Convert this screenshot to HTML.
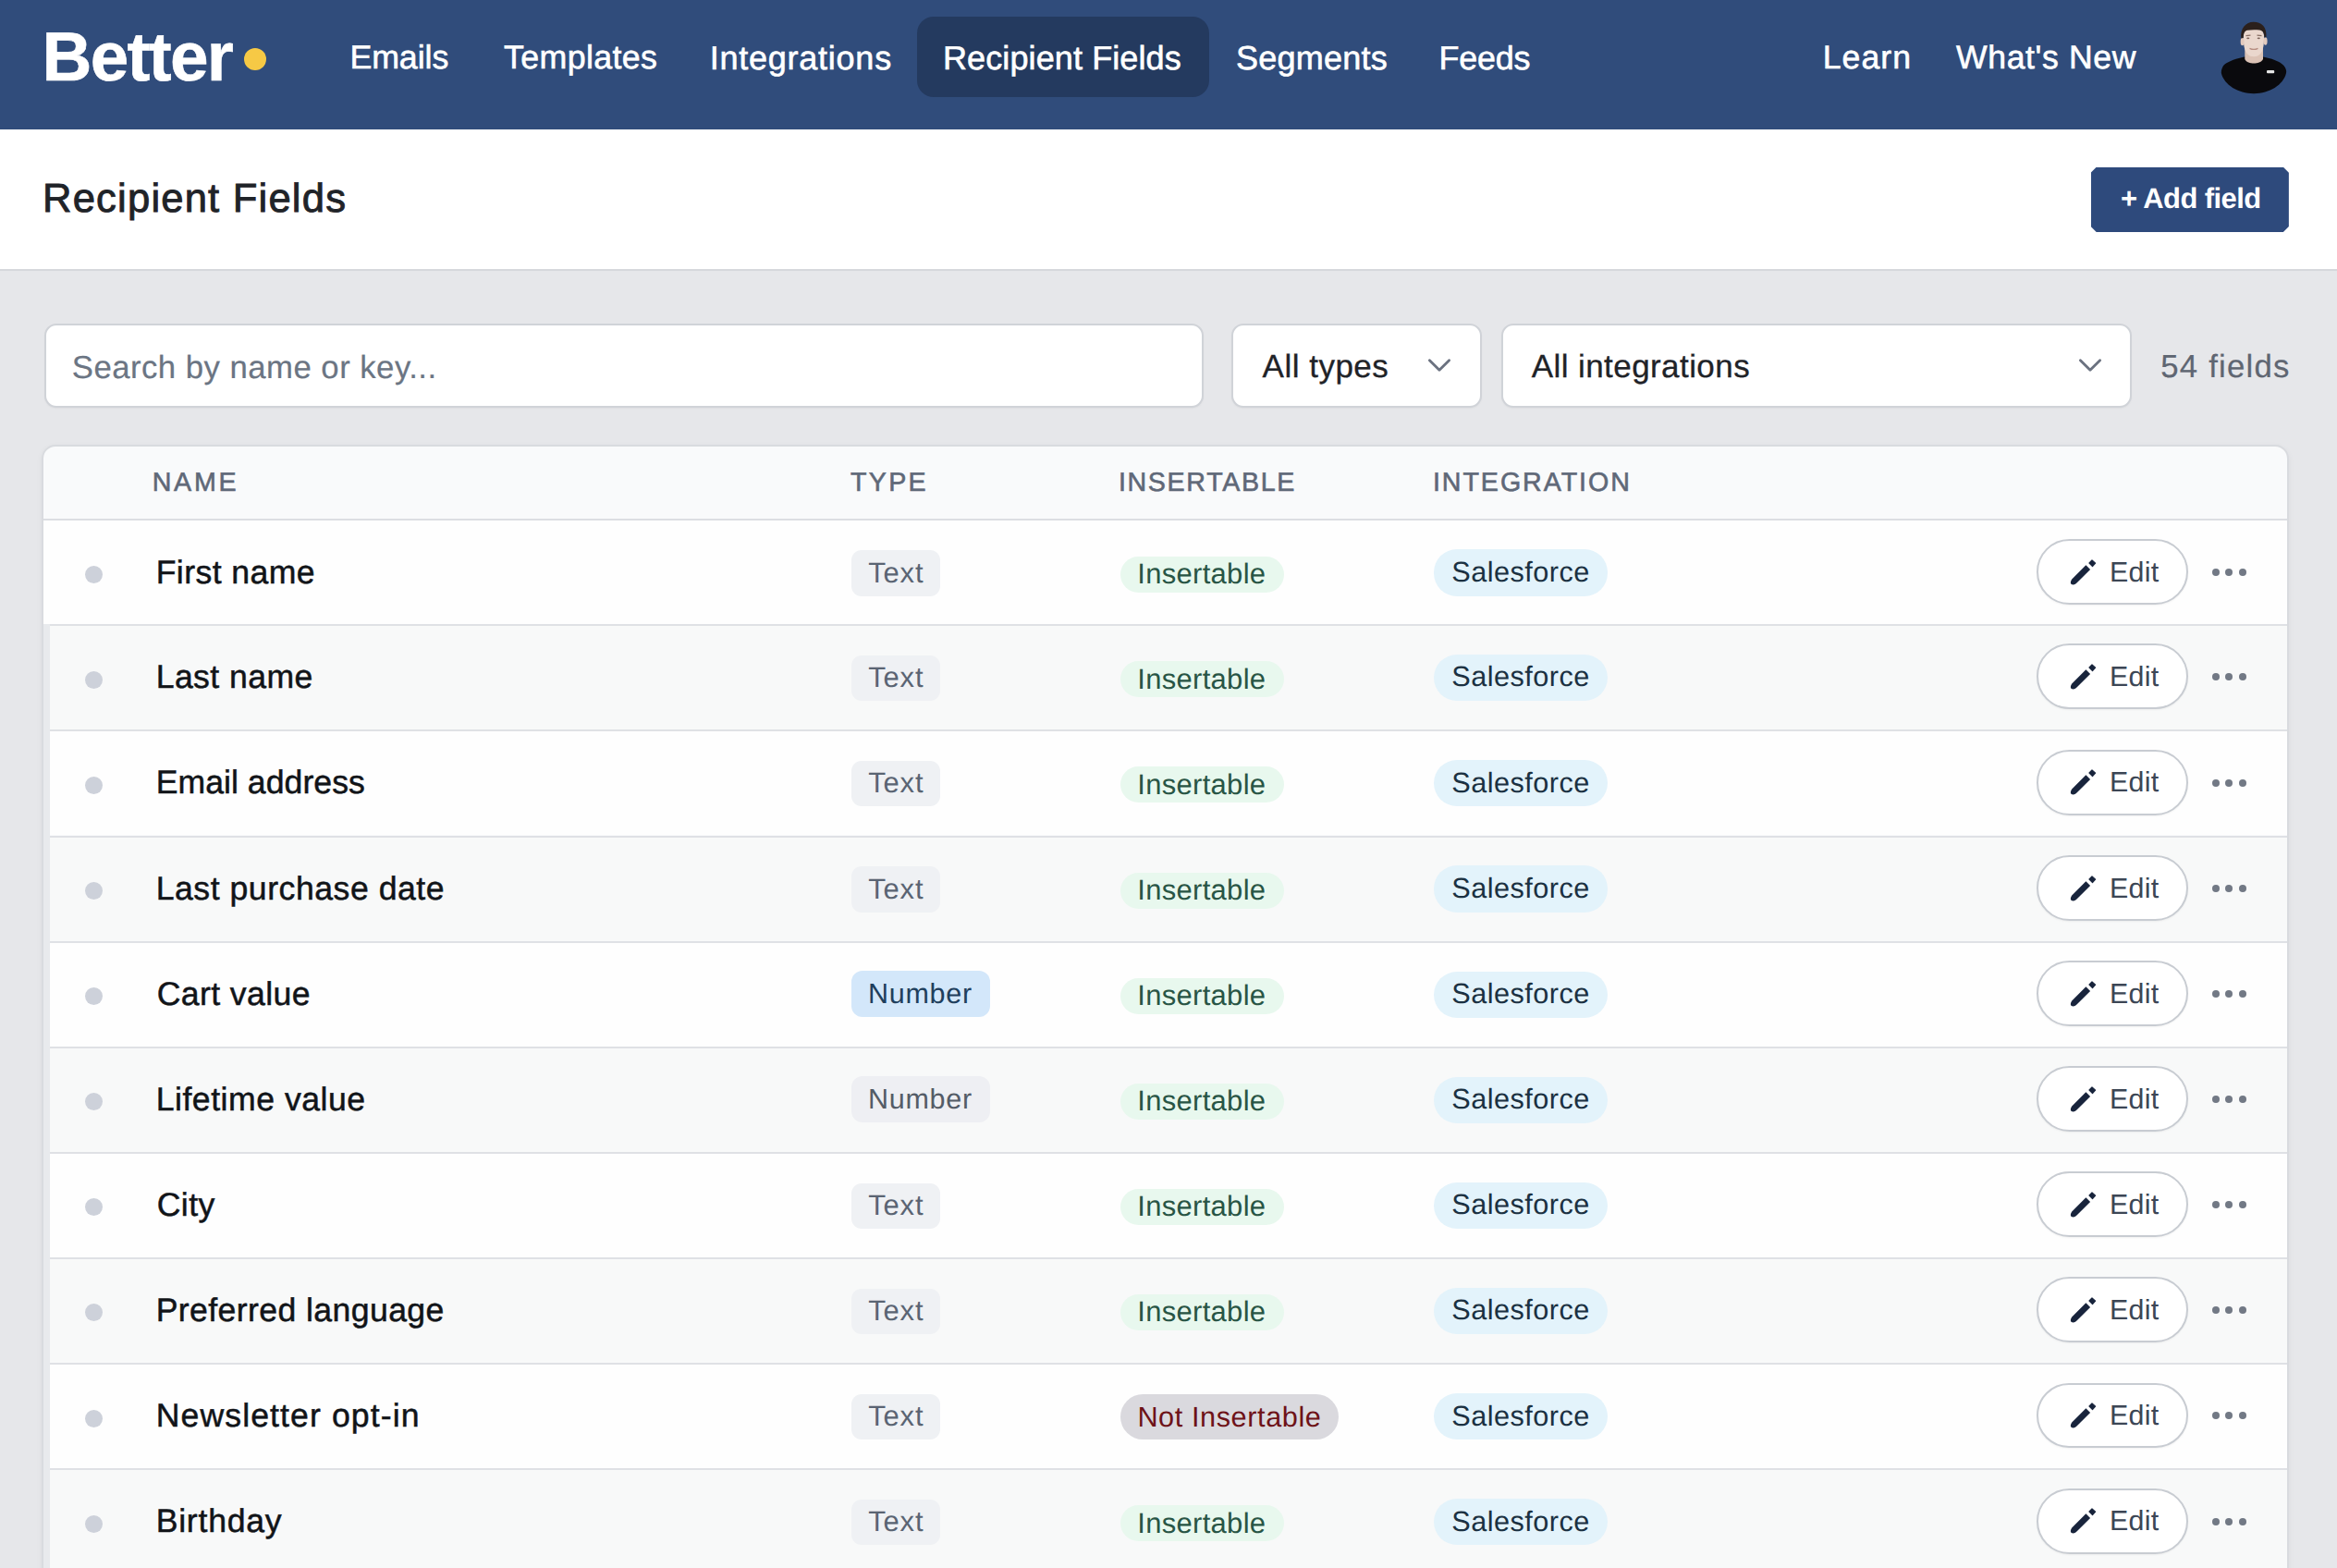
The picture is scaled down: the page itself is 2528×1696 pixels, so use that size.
<!DOCTYPE html>
<html><head><meta charset="utf-8"><title>Recipient Fields</title>
<style>
html,body{margin:0;padding:0}
body{width:2528px;height:1696px;overflow:hidden;position:relative;background:#e6e7ea;font-family:"Liberation Sans",sans-serif;text-rendering:geometricPrecision}
.t{position:absolute;white-space:nowrap;line-height:1}
.b{position:absolute;box-sizing:border-box}
</style></head><body>
<div class="b" style="left:0.00px;top:0.00px;width:2528.00px;height:140.00px;background:#304c7b"></div>
<div class="t" style="left:45.50px;top:24.00px;font-size:74.71px;font-weight:700;letter-spacing:-1.7px;color:#ffffff;-webkit-text-stroke:0.6px #ffffff;">Better</div>
<div class="b" style="left:263.50px;top:52.00px;width:24.00px;height:24.00px;background:#f6c945;border-radius:50%"></div>
<div class="b" style="left:992.30px;top:17.50px;width:315.80px;height:87.80px;background:#243a5f;border-radius:18px"></div>
<div class="t" style="left:378.40px;top:45.40px;font-size:35.76px;font-weight:400;letter-spacing:-0.08px;color:#ffffff;-webkit-text-stroke:0.6px #ffffff;">Emails</div>
<div class="t" style="left:545.00px;top:45.40px;font-size:35.76px;font-weight:400;letter-spacing:0.375px;color:#ffffff;-webkit-text-stroke:0.6px #ffffff;">Templates</div>
<div class="t" style="left:767.80px;top:44.60px;font-size:36.05px;font-weight:400;letter-spacing:0.727px;color:#ffffff;-webkit-text-stroke:0.6px #ffffff;">Integrations</div>
<div class="t" style="left:1020.00px;top:44.60px;font-size:36.05px;font-weight:400;letter-spacing:0.087px;color:#ffffff;-webkit-text-stroke:0.6px #ffffff;">Recipient Fields</div>
<div class="t" style="left:1337.00px;top:44.60px;font-size:36.05px;font-weight:400;letter-spacing:0.2px;color:#ffffff;-webkit-text-stroke:0.6px #ffffff;">Segments</div>
<div class="t" style="left:1556.60px;top:45.50px;font-size:35.9px;font-weight:400;letter-spacing:-0.25px;color:#ffffff;-webkit-text-stroke:0.6px #ffffff;">Feeds</div>
<div class="t" style="left:1971.70px;top:45.30px;font-size:35.61px;font-weight:400;letter-spacing:1.075px;color:#ffffff;-webkit-text-stroke:0.6px #ffffff;">Learn</div>
<div class="t" style="left:2116.00px;top:45.30px;font-size:35.61px;font-weight:400;letter-spacing:0.622px;color:#ffffff;-webkit-text-stroke:0.6px #ffffff;">What's New</div>
<svg style="position:absolute;left:2398px;top:20px" width="80" height="84" viewBox="2398 20 80 84">
<path d="M2427.8 61.5 L2448.2 61.5 C2456 63 2466 66 2470.5 71 C2473 74 2473.5 77 2473 79 C2470 92 2455 101 2438 101.2 C2421 101 2406 92 2402.8 79 C2402.5 76 2404 72 2406 70 C2411 66 2420 63 2427.8 61.5 Z" fill="#0a0a0d"/>
<path d="M2428.3 52 L2448 52 L2448 64 C2446 67.5 2442 68.5 2438 68.5 C2434 68.5 2430 67.5 2428.3 64 Z" fill="#dcc3b6"/>
<path d="M2426.8 38 C2426.5 47 2427.5 53 2430 57 C2432.5 60.5 2435 61.3 2438 61.3 C2441 61.3 2443.5 60.5 2446 57 C2448.5 53 2449.2 47 2449 38 C2448 31 2443 29 2438 29 C2433 29 2427.5 31 2426.8 38 Z" fill="#ead7cd"/>
<ellipse cx="2425.6" cy="45" rx="2" ry="4.3" fill="#e2c9bd"/>
<ellipse cx="2450.6" cy="44.5" rx="2" ry="4.3" fill="#e2c9bd"/>
<path d="M2424.3 41.5 C2423 30 2430 23.5 2438 23.8 C2446 23.8 2452.5 29 2451.4 40.5 L2449.5 40 C2449 35 2447.5 33 2444 32.5 C2440 32 2435 32 2431 32.8 C2428 33.5 2427 36 2426.6 41 Z" fill="#2b201c"/>
<path d="M2429.5 38.6 L2434.5 38.2 M2441.5 38.2 L2446.5 38.6" stroke="#8a7066" stroke-width="1.2"/>
<ellipse cx="2431.8" cy="41.3" rx="1.6" ry="0.9" fill="#7d655c"/>
<ellipse cx="2443.3" cy="41.3" rx="1.6" ry="0.9" fill="#7d655c"/>
<path d="M2433.5 52.3 C2436 53.6 2440 53.6 2442.5 52.3" stroke="#b58c80" stroke-width="1.3" fill="none"/>
<rect x="2452" y="76" width="8.2" height="3.2" rx="1" fill="#e6e6e6"/>
</svg>
<div class="b" style="left:0.00px;top:140.00px;width:2528.00px;height:153.00px;background:#ffffff;border-bottom:2px solid #d6d8dc"></div>
<div class="t" style="left:46.00px;top:194.20px;font-size:43.6px;font-weight:400;letter-spacing:1.187px;color:#1f2328;-webkit-text-stroke:0.9px #1f2328;">Recipient Fields</div>
<div class="b" style="left:2261.7px;top:180.8px;width:214.2px;height:70.1px;background:#2e4a7c;clip-path:polygon(6px 0,calc(100% - 6px) 0,100% 6px,100% calc(100% - 6px),calc(100% - 6px) 100%,6px 100%,0 calc(100% - 6px),0 6px)"></div>
<div class="t" style="left:2293.90px;top:200.30px;font-size:30.96px;font-weight:700;letter-spacing:-0.57px;color:#ffffff;">+ Add field</div>
<div class="b" style="left:47.50px;top:350.00px;width:1254.50px;height:90.50px;background:#fff;border:2px solid #d0d3d8;border-radius:13px;box-shadow:0 1px 2px rgba(0,0,0,0.04)"></div>
<div class="t" style="left:77.80px;top:380.60px;font-size:34.74px;font-weight:400;letter-spacing:0.465px;color:#6b7583;-webkit-text-stroke:0.2px #6b7583;">Search by name or key...</div>
<div class="b" style="left:1332.00px;top:350.00px;width:270.80px;height:90.50px;background:#fff;border:2px solid #d0d3d8;border-radius:13px;box-shadow:0 1px 2px rgba(0,0,0,0.04)"></div>
<div class="t" style="left:1365.60px;top:378.60px;font-size:35.03px;font-weight:400;letter-spacing:0.488px;color:#1f2328;-webkit-text-stroke:0.3px #1f2328;">All types</div>
<div class="b" style="left:1624.40px;top:350.00px;width:681.90px;height:90.50px;background:#fff;border:2px solid #d0d3d8;border-radius:13px;box-shadow:0 1px 2px rgba(0,0,0,0.04)"></div>
<div class="t" style="left:1656.70px;top:378.60px;font-size:35.03px;font-weight:400;letter-spacing:0.42px;color:#1f2328;-webkit-text-stroke:0.3px #1f2328;">All integrations</div>
<svg style="position:absolute;left:1543px;top:386px" width="28" height="18" viewBox="0 0 28 18"><path d="M3.4 3.8 L14 14.2 L24.6 3.8" fill="none" stroke="#6b7280" stroke-width="2.9" stroke-linecap="round" stroke-linejoin="round"/></svg>
<svg style="position:absolute;left:2247px;top:386px" width="28" height="18" viewBox="0 0 28 18"><path d="M3.4 3.8 L14 14.2 L24.6 3.8" fill="none" stroke="#6b7280" stroke-width="2.9" stroke-linecap="round" stroke-linejoin="round"/></svg>
<div class="t" style="left:2337.30px;top:379.50px;font-size:34.74px;font-weight:400;letter-spacing:1.212px;color:#5f6672;-webkit-text-stroke:0.2px #5f6672;">54 fields</div>
<div class="b" style="left:45.00px;top:480.50px;width:2431.00px;height:1279.50px;background:#f9fafb;border:2px solid #d9dbdf;border-radius:15px;box-shadow:0 2px 6px rgba(0,0,0,0.05)"></div>
<div class="b" style="left:47.00px;top:561.00px;width:2427.00px;height:2.00px;background:#dcdee2"></div>
<div class="t" style="left:164.70px;top:507.60px;font-size:28.63px;font-weight:400;letter-spacing:2.733px;color:#5f6878;-webkit-text-stroke:0.6px #5f6878;">NAME</div>
<div class="t" style="left:920.00px;top:507.60px;font-size:28.63px;font-weight:400;letter-spacing:2.3px;color:#5f6878;-webkit-text-stroke:0.6px #5f6878;">TYPE</div>
<div class="t" style="left:1209.90px;top:507.60px;font-size:28.63px;font-weight:400;letter-spacing:1.656px;color:#5f6878;-webkit-text-stroke:0.6px #5f6878;">INSERTABLE</div>
<div class="t" style="left:1549.90px;top:507.60px;font-size:28.63px;font-weight:400;letter-spacing:1.95px;color:#5f6878;-webkit-text-stroke:0.6px #5f6878;">INTEGRATION</div>
<div class="b" style="left:47.00px;top:563.00px;width:2427.00px;height:112.20px;background:#fefefe"></div>
<div class="b" style="left:47.00px;top:675.20px;width:2427.00px;height:2.00px;background:#dfe1e5"></div>
<div class="b" style="left:92.30px;top:611.90px;width:19.00px;height:19.00px;background:#cdd1da;border-radius:50%"></div>
<div class="t" style="left:168.70px;top:601.60px;font-size:35.61px;font-weight:400;letter-spacing:0.411px;color:#111418;-webkit-text-stroke:0.5px #111418;">First name</div>
<div class="b" style="left:921.00px;top:595.10px;width:96.20px;height:49.50px;background:#eff1f4;border-radius:11px"></div>
<div class="t" style="left:939.20px;top:604.60px;font-size:30.96px;font-weight:400;letter-spacing:0.867px;color:#5a6473;">Text</div>
<div class="b" style="left:1211.70px;top:601.60px;width:177.10px;height:39.00px;background:#e8f8ee;border-radius:20px"></div>
<div class="t" style="left:1230.30px;top:605.90px;font-size:30.96px;font-weight:400;letter-spacing:0.311px;color:#285545;">Insertable</div>
<div class="b" style="left:1550.70px;top:594.40px;width:188.00px;height:50.20px;background:#e3f3fb;border-radius:25px"></div>
<div class="t" style="left:1570.30px;top:603.80px;font-size:30.67px;font-weight:400;letter-spacing:0.467px;color:#1b3142;">Salesforce</div>
<div class="b" style="left:2203.00px;top:582.80px;width:164.20px;height:70.90px;background:#fff;border:2px solid #c8ccd2;border-radius:36px;box-shadow:0 1px 2px rgba(0,0,0,0.05)"></div>
<svg style="position:absolute;left:2236px;top:601.60px" width="34" height="34" viewBox="0 0 34 34"><path d="M20.4 9.3 L25.1 14 L10 29.1 Q8 30.9 5.5 30.3 Q3.6 29.8 3.8 28 Q4 26 5.2 24.5 Z" fill="#18243c"/><path d="M27 3.9 L30.6 7.1 L27.5 10.6 L24 7 Z" fill="#18243c" stroke="#18243c" stroke-width="1.2" stroke-linejoin="round"/></svg>
<div class="t" style="left:2281.90px;top:603.60px;font-size:30.38px;font-weight:400;letter-spacing:0.333px;color:#3c4655;">Edit</div>
<div class="b" style="left:2393.00px;top:614.70px;width:8.00px;height:8.00px;background:#727985;border-radius:50%"></div>
<div class="b" style="left:2407.30px;top:614.70px;width:8.00px;height:8.00px;background:#727985;border-radius:50%"></div>
<div class="b" style="left:2421.70px;top:614.70px;width:8.00px;height:8.00px;background:#727985;border-radius:50%"></div>
<div class="b" style="left:47.00px;top:675.20px;width:7.00px;height:116.15px;background:#e8eaed"></div>
<div class="b" style="left:54.00px;top:677.20px;width:2420.00px;height:112.15px;background:#f8f9f9"></div>
<div class="b" style="left:54.00px;top:789.35px;width:2420.00px;height:2.00px;background:#dfe1e5"></div>
<div class="b" style="left:92.30px;top:725.58px;width:19.00px;height:19.00px;background:#cdd1da;border-radius:50%"></div>
<div class="t" style="left:168.70px;top:715.28px;font-size:35.61px;font-weight:400;letter-spacing:0.413px;color:#111418;-webkit-text-stroke:0.5px #111418;">Last name</div>
<div class="b" style="left:921.00px;top:708.78px;width:96.20px;height:49.50px;background:#eff1f4;border-radius:11px"></div>
<div class="t" style="left:939.20px;top:718.28px;font-size:30.96px;font-weight:400;letter-spacing:0.867px;color:#5a6473;">Text</div>
<div class="b" style="left:1211.70px;top:715.28px;width:177.10px;height:39.00px;background:#e8f8ee;border-radius:20px"></div>
<div class="t" style="left:1230.30px;top:719.58px;font-size:30.96px;font-weight:400;letter-spacing:0.311px;color:#285545;">Insertable</div>
<div class="b" style="left:1550.70px;top:708.08px;width:188.00px;height:50.20px;background:#e3f3fb;border-radius:25px"></div>
<div class="t" style="left:1570.30px;top:717.48px;font-size:30.67px;font-weight:400;letter-spacing:0.467px;color:#1b3142;">Salesforce</div>
<div class="b" style="left:2203.00px;top:696.48px;width:164.20px;height:70.90px;background:#fff;border:2px solid #c8ccd2;border-radius:36px;box-shadow:0 1px 2px rgba(0,0,0,0.05)"></div>
<svg style="position:absolute;left:2236px;top:715.28px" width="34" height="34" viewBox="0 0 34 34"><path d="M20.4 9.3 L25.1 14 L10 29.1 Q8 30.9 5.5 30.3 Q3.6 29.8 3.8 28 Q4 26 5.2 24.5 Z" fill="#18243c"/><path d="M27 3.9 L30.6 7.1 L27.5 10.6 L24 7 Z" fill="#18243c" stroke="#18243c" stroke-width="1.2" stroke-linejoin="round"/></svg>
<div class="t" style="left:2281.90px;top:717.28px;font-size:30.38px;font-weight:400;letter-spacing:0.333px;color:#3c4655;">Edit</div>
<div class="b" style="left:2393.00px;top:728.38px;width:8.00px;height:8.00px;background:#727985;border-radius:50%"></div>
<div class="b" style="left:2407.30px;top:728.38px;width:8.00px;height:8.00px;background:#727985;border-radius:50%"></div>
<div class="b" style="left:2421.70px;top:728.38px;width:8.00px;height:8.00px;background:#727985;border-radius:50%"></div>
<div class="b" style="left:47.00px;top:789.35px;width:7.00px;height:116.15px;background:#e8eaed"></div>
<div class="b" style="left:54.00px;top:791.35px;width:2420.00px;height:112.15px;background:#fefefe"></div>
<div class="b" style="left:54.00px;top:903.50px;width:2420.00px;height:2.00px;background:#dfe1e5"></div>
<div class="b" style="left:92.30px;top:839.72px;width:19.00px;height:19.00px;background:#cdd1da;border-radius:50%"></div>
<div class="t" style="left:168.70px;top:829.42px;font-size:35.61px;font-weight:400;letter-spacing:0.042px;color:#111418;-webkit-text-stroke:0.5px #111418;">Email address</div>
<div class="b" style="left:921.00px;top:822.92px;width:96.20px;height:49.50px;background:#eff1f4;border-radius:11px"></div>
<div class="t" style="left:939.20px;top:832.42px;font-size:30.96px;font-weight:400;letter-spacing:0.867px;color:#5a6473;">Text</div>
<div class="b" style="left:1211.70px;top:829.42px;width:177.10px;height:39.00px;background:#e8f8ee;border-radius:20px"></div>
<div class="t" style="left:1230.30px;top:833.72px;font-size:30.96px;font-weight:400;letter-spacing:0.311px;color:#285545;">Insertable</div>
<div class="b" style="left:1550.70px;top:822.22px;width:188.00px;height:50.20px;background:#e3f3fb;border-radius:25px"></div>
<div class="t" style="left:1570.30px;top:831.62px;font-size:30.67px;font-weight:400;letter-spacing:0.467px;color:#1b3142;">Salesforce</div>
<div class="b" style="left:2203.00px;top:810.62px;width:164.20px;height:70.90px;background:#fff;border:2px solid #c8ccd2;border-radius:36px;box-shadow:0 1px 2px rgba(0,0,0,0.05)"></div>
<svg style="position:absolute;left:2236px;top:829.42px" width="34" height="34" viewBox="0 0 34 34"><path d="M20.4 9.3 L25.1 14 L10 29.1 Q8 30.9 5.5 30.3 Q3.6 29.8 3.8 28 Q4 26 5.2 24.5 Z" fill="#18243c"/><path d="M27 3.9 L30.6 7.1 L27.5 10.6 L24 7 Z" fill="#18243c" stroke="#18243c" stroke-width="1.2" stroke-linejoin="round"/></svg>
<div class="t" style="left:2281.90px;top:831.42px;font-size:30.38px;font-weight:400;letter-spacing:0.333px;color:#3c4655;">Edit</div>
<div class="b" style="left:2393.00px;top:842.52px;width:8.00px;height:8.00px;background:#727985;border-radius:50%"></div>
<div class="b" style="left:2407.30px;top:842.52px;width:8.00px;height:8.00px;background:#727985;border-radius:50%"></div>
<div class="b" style="left:2421.70px;top:842.52px;width:8.00px;height:8.00px;background:#727985;border-radius:50%"></div>
<div class="b" style="left:47.00px;top:903.50px;width:7.00px;height:116.15px;background:#e8eaed"></div>
<div class="b" style="left:54.00px;top:905.50px;width:2420.00px;height:112.15px;background:#f8f9f9"></div>
<div class="b" style="left:54.00px;top:1017.65px;width:2420.00px;height:2.00px;background:#dfe1e5"></div>
<div class="b" style="left:92.30px;top:953.88px;width:19.00px;height:19.00px;background:#cdd1da;border-radius:50%"></div>
<div class="t" style="left:168.70px;top:943.58px;font-size:35.61px;font-weight:400;letter-spacing:0.529px;color:#111418;-webkit-text-stroke:0.5px #111418;">Last purchase date</div>
<div class="b" style="left:921.00px;top:937.08px;width:96.20px;height:49.50px;background:#eff1f4;border-radius:11px"></div>
<div class="t" style="left:939.20px;top:946.58px;font-size:30.96px;font-weight:400;letter-spacing:0.867px;color:#5a6473;">Text</div>
<div class="b" style="left:1211.70px;top:943.58px;width:177.10px;height:39.00px;background:#e8f8ee;border-radius:20px"></div>
<div class="t" style="left:1230.30px;top:947.88px;font-size:30.96px;font-weight:400;letter-spacing:0.311px;color:#285545;">Insertable</div>
<div class="b" style="left:1550.70px;top:936.38px;width:188.00px;height:50.20px;background:#e3f3fb;border-radius:25px"></div>
<div class="t" style="left:1570.30px;top:945.77px;font-size:30.67px;font-weight:400;letter-spacing:0.467px;color:#1b3142;">Salesforce</div>
<div class="b" style="left:2203.00px;top:924.78px;width:164.20px;height:70.90px;background:#fff;border:2px solid #c8ccd2;border-radius:36px;box-shadow:0 1px 2px rgba(0,0,0,0.05)"></div>
<svg style="position:absolute;left:2236px;top:943.58px" width="34" height="34" viewBox="0 0 34 34"><path d="M20.4 9.3 L25.1 14 L10 29.1 Q8 30.9 5.5 30.3 Q3.6 29.8 3.8 28 Q4 26 5.2 24.5 Z" fill="#18243c"/><path d="M27 3.9 L30.6 7.1 L27.5 10.6 L24 7 Z" fill="#18243c" stroke="#18243c" stroke-width="1.2" stroke-linejoin="round"/></svg>
<div class="t" style="left:2281.90px;top:945.58px;font-size:30.38px;font-weight:400;letter-spacing:0.333px;color:#3c4655;">Edit</div>
<div class="b" style="left:2393.00px;top:956.68px;width:8.00px;height:8.00px;background:#727985;border-radius:50%"></div>
<div class="b" style="left:2407.30px;top:956.68px;width:8.00px;height:8.00px;background:#727985;border-radius:50%"></div>
<div class="b" style="left:2421.70px;top:956.68px;width:8.00px;height:8.00px;background:#727985;border-radius:50%"></div>
<div class="b" style="left:47.00px;top:1017.65px;width:7.00px;height:116.15px;background:#e8eaed"></div>
<div class="b" style="left:54.00px;top:1019.65px;width:2420.00px;height:112.15px;background:#fefefe"></div>
<div class="b" style="left:54.00px;top:1131.80px;width:2420.00px;height:2.00px;background:#dfe1e5"></div>
<div class="b" style="left:92.30px;top:1068.03px;width:19.00px;height:19.00px;background:#cdd1da;border-radius:50%"></div>
<div class="t" style="left:169.70px;top:1057.73px;font-size:35.61px;font-weight:400;letter-spacing:0.4px;color:#111418;-webkit-text-stroke:0.5px #111418;">Cart value</div>
<div class="b" style="left:921.00px;top:1050.23px;width:149.70px;height:50.00px;background:#d3e7fa;border-radius:12px"></div>
<div class="t" style="left:938.90px;top:1059.93px;font-size:30.52px;font-weight:400;letter-spacing:0.74px;color:#1f3f5d;">Number</div>
<div class="b" style="left:1211.70px;top:1057.73px;width:177.10px;height:39.00px;background:#e8f8ee;border-radius:20px"></div>
<div class="t" style="left:1230.30px;top:1062.03px;font-size:30.96px;font-weight:400;letter-spacing:0.311px;color:#285545;">Insertable</div>
<div class="b" style="left:1550.70px;top:1050.53px;width:188.00px;height:50.20px;background:#e3f3fb;border-radius:25px"></div>
<div class="t" style="left:1570.30px;top:1059.93px;font-size:30.67px;font-weight:400;letter-spacing:0.467px;color:#1b3142;">Salesforce</div>
<div class="b" style="left:2203.00px;top:1038.93px;width:164.20px;height:70.90px;background:#fff;border:2px solid #c8ccd2;border-radius:36px;box-shadow:0 1px 2px rgba(0,0,0,0.05)"></div>
<svg style="position:absolute;left:2236px;top:1057.73px" width="34" height="34" viewBox="0 0 34 34"><path d="M20.4 9.3 L25.1 14 L10 29.1 Q8 30.9 5.5 30.3 Q3.6 29.8 3.8 28 Q4 26 5.2 24.5 Z" fill="#18243c"/><path d="M27 3.9 L30.6 7.1 L27.5 10.6 L24 7 Z" fill="#18243c" stroke="#18243c" stroke-width="1.2" stroke-linejoin="round"/></svg>
<div class="t" style="left:2281.90px;top:1059.73px;font-size:30.38px;font-weight:400;letter-spacing:0.333px;color:#3c4655;">Edit</div>
<div class="b" style="left:2393.00px;top:1070.83px;width:8.00px;height:8.00px;background:#727985;border-radius:50%"></div>
<div class="b" style="left:2407.30px;top:1070.83px;width:8.00px;height:8.00px;background:#727985;border-radius:50%"></div>
<div class="b" style="left:2421.70px;top:1070.83px;width:8.00px;height:8.00px;background:#727985;border-radius:50%"></div>
<div class="b" style="left:47.00px;top:1131.80px;width:7.00px;height:116.15px;background:#e8eaed"></div>
<div class="b" style="left:54.00px;top:1133.80px;width:2420.00px;height:112.15px;background:#f8f9f9"></div>
<div class="b" style="left:54.00px;top:1245.95px;width:2420.00px;height:2.00px;background:#dfe1e5"></div>
<div class="b" style="left:92.30px;top:1182.17px;width:19.00px;height:19.00px;background:#cdd1da;border-radius:50%"></div>
<div class="t" style="left:168.70px;top:1171.88px;font-size:35.61px;font-weight:400;letter-spacing:0.515px;color:#111418;-webkit-text-stroke:0.5px #111418;">Lifetime value</div>
<div class="b" style="left:921.00px;top:1164.38px;width:149.70px;height:50.00px;background:#eeeff3;border-radius:12px"></div>
<div class="t" style="left:938.90px;top:1174.07px;font-size:30.52px;font-weight:400;letter-spacing:0.74px;color:#545c67;">Number</div>
<div class="b" style="left:1211.70px;top:1171.88px;width:177.10px;height:39.00px;background:#e8f8ee;border-radius:20px"></div>
<div class="t" style="left:1230.30px;top:1176.17px;font-size:30.96px;font-weight:400;letter-spacing:0.311px;color:#285545;">Insertable</div>
<div class="b" style="left:1550.70px;top:1164.67px;width:188.00px;height:50.20px;background:#e3f3fb;border-radius:25px"></div>
<div class="t" style="left:1570.30px;top:1174.07px;font-size:30.67px;font-weight:400;letter-spacing:0.467px;color:#1b3142;">Salesforce</div>
<div class="b" style="left:2203.00px;top:1153.08px;width:164.20px;height:70.90px;background:#fff;border:2px solid #c8ccd2;border-radius:36px;box-shadow:0 1px 2px rgba(0,0,0,0.05)"></div>
<svg style="position:absolute;left:2236px;top:1171.88px" width="34" height="34" viewBox="0 0 34 34"><path d="M20.4 9.3 L25.1 14 L10 29.1 Q8 30.9 5.5 30.3 Q3.6 29.8 3.8 28 Q4 26 5.2 24.5 Z" fill="#18243c"/><path d="M27 3.9 L30.6 7.1 L27.5 10.6 L24 7 Z" fill="#18243c" stroke="#18243c" stroke-width="1.2" stroke-linejoin="round"/></svg>
<div class="t" style="left:2281.90px;top:1173.88px;font-size:30.38px;font-weight:400;letter-spacing:0.333px;color:#3c4655;">Edit</div>
<div class="b" style="left:2393.00px;top:1184.97px;width:8.00px;height:8.00px;background:#727985;border-radius:50%"></div>
<div class="b" style="left:2407.30px;top:1184.97px;width:8.00px;height:8.00px;background:#727985;border-radius:50%"></div>
<div class="b" style="left:2421.70px;top:1184.97px;width:8.00px;height:8.00px;background:#727985;border-radius:50%"></div>
<div class="b" style="left:47.00px;top:1245.95px;width:7.00px;height:116.15px;background:#e8eaed"></div>
<div class="b" style="left:54.00px;top:1247.95px;width:2420.00px;height:112.15px;background:#fefefe"></div>
<div class="b" style="left:54.00px;top:1360.10px;width:2420.00px;height:2.00px;background:#dfe1e5"></div>
<div class="b" style="left:92.30px;top:1296.33px;width:19.00px;height:19.00px;background:#cdd1da;border-radius:50%"></div>
<div class="t" style="left:169.70px;top:1286.03px;font-size:35.61px;font-weight:400;letter-spacing:0.467px;color:#111418;-webkit-text-stroke:0.5px #111418;">City</div>
<div class="b" style="left:921.00px;top:1279.53px;width:96.20px;height:49.50px;background:#eff1f4;border-radius:11px"></div>
<div class="t" style="left:939.20px;top:1289.03px;font-size:30.96px;font-weight:400;letter-spacing:0.867px;color:#5a6473;">Text</div>
<div class="b" style="left:1211.70px;top:1286.03px;width:177.10px;height:39.00px;background:#e8f8ee;border-radius:20px"></div>
<div class="t" style="left:1230.30px;top:1290.33px;font-size:30.96px;font-weight:400;letter-spacing:0.311px;color:#285545;">Insertable</div>
<div class="b" style="left:1550.70px;top:1278.83px;width:188.00px;height:50.20px;background:#e3f3fb;border-radius:25px"></div>
<div class="t" style="left:1570.30px;top:1288.22px;font-size:30.67px;font-weight:400;letter-spacing:0.467px;color:#1b3142;">Salesforce</div>
<div class="b" style="left:2203.00px;top:1267.23px;width:164.20px;height:70.90px;background:#fff;border:2px solid #c8ccd2;border-radius:36px;box-shadow:0 1px 2px rgba(0,0,0,0.05)"></div>
<svg style="position:absolute;left:2236px;top:1286.03px" width="34" height="34" viewBox="0 0 34 34"><path d="M20.4 9.3 L25.1 14 L10 29.1 Q8 30.9 5.5 30.3 Q3.6 29.8 3.8 28 Q4 26 5.2 24.5 Z" fill="#18243c"/><path d="M27 3.9 L30.6 7.1 L27.5 10.6 L24 7 Z" fill="#18243c" stroke="#18243c" stroke-width="1.2" stroke-linejoin="round"/></svg>
<div class="t" style="left:2281.90px;top:1288.03px;font-size:30.38px;font-weight:400;letter-spacing:0.333px;color:#3c4655;">Edit</div>
<div class="b" style="left:2393.00px;top:1299.12px;width:8.00px;height:8.00px;background:#727985;border-radius:50%"></div>
<div class="b" style="left:2407.30px;top:1299.12px;width:8.00px;height:8.00px;background:#727985;border-radius:50%"></div>
<div class="b" style="left:2421.70px;top:1299.12px;width:8.00px;height:8.00px;background:#727985;border-radius:50%"></div>
<div class="b" style="left:47.00px;top:1360.10px;width:7.00px;height:116.15px;background:#e8eaed"></div>
<div class="b" style="left:54.00px;top:1362.10px;width:2420.00px;height:112.15px;background:#f8f9f9"></div>
<div class="b" style="left:54.00px;top:1474.25px;width:2420.00px;height:2.00px;background:#dfe1e5"></div>
<div class="b" style="left:92.30px;top:1410.48px;width:19.00px;height:19.00px;background:#cdd1da;border-radius:50%"></div>
<div class="t" style="left:168.70px;top:1400.18px;font-size:35.61px;font-weight:400;letter-spacing:0.4px;color:#111418;-webkit-text-stroke:0.5px #111418;">Preferred language</div>
<div class="b" style="left:921.00px;top:1393.68px;width:96.20px;height:49.50px;background:#eff1f4;border-radius:11px"></div>
<div class="t" style="left:939.20px;top:1403.18px;font-size:30.96px;font-weight:400;letter-spacing:0.867px;color:#5a6473;">Text</div>
<div class="b" style="left:1211.70px;top:1400.18px;width:177.10px;height:39.00px;background:#e8f8ee;border-radius:20px"></div>
<div class="t" style="left:1230.30px;top:1404.48px;font-size:30.96px;font-weight:400;letter-spacing:0.311px;color:#285545;">Insertable</div>
<div class="b" style="left:1550.70px;top:1392.98px;width:188.00px;height:50.20px;background:#e3f3fb;border-radius:25px"></div>
<div class="t" style="left:1570.30px;top:1402.38px;font-size:30.67px;font-weight:400;letter-spacing:0.467px;color:#1b3142;">Salesforce</div>
<div class="b" style="left:2203.00px;top:1381.38px;width:164.20px;height:70.90px;background:#fff;border:2px solid #c8ccd2;border-radius:36px;box-shadow:0 1px 2px rgba(0,0,0,0.05)"></div>
<svg style="position:absolute;left:2236px;top:1400.18px" width="34" height="34" viewBox="0 0 34 34"><path d="M20.4 9.3 L25.1 14 L10 29.1 Q8 30.9 5.5 30.3 Q3.6 29.8 3.8 28 Q4 26 5.2 24.5 Z" fill="#18243c"/><path d="M27 3.9 L30.6 7.1 L27.5 10.6 L24 7 Z" fill="#18243c" stroke="#18243c" stroke-width="1.2" stroke-linejoin="round"/></svg>
<div class="t" style="left:2281.90px;top:1402.18px;font-size:30.38px;font-weight:400;letter-spacing:0.333px;color:#3c4655;">Edit</div>
<div class="b" style="left:2393.00px;top:1413.28px;width:8.00px;height:8.00px;background:#727985;border-radius:50%"></div>
<div class="b" style="left:2407.30px;top:1413.28px;width:8.00px;height:8.00px;background:#727985;border-radius:50%"></div>
<div class="b" style="left:2421.70px;top:1413.28px;width:8.00px;height:8.00px;background:#727985;border-radius:50%"></div>
<div class="b" style="left:47.00px;top:1474.25px;width:7.00px;height:116.15px;background:#e8eaed"></div>
<div class="b" style="left:54.00px;top:1476.25px;width:2420.00px;height:112.15px;background:#fefefe"></div>
<div class="b" style="left:54.00px;top:1588.40px;width:2420.00px;height:2.00px;background:#dfe1e5"></div>
<div class="b" style="left:92.30px;top:1524.62px;width:19.00px;height:19.00px;background:#cdd1da;border-radius:50%"></div>
<div class="t" style="left:168.70px;top:1514.33px;font-size:35.61px;font-weight:400;letter-spacing:1.106px;color:#111418;-webkit-text-stroke:0.5px #111418;">Newsletter opt-in</div>
<div class="b" style="left:921.00px;top:1507.83px;width:96.20px;height:49.50px;background:#eff1f4;border-radius:11px"></div>
<div class="t" style="left:939.20px;top:1517.33px;font-size:30.96px;font-weight:400;letter-spacing:0.867px;color:#5a6473;">Text</div>
<div class="b" style="left:1212.00px;top:1508.12px;width:236.10px;height:48.70px;background:#dad9de;border-radius:25px"></div>
<div class="t" style="left:1230.40px;top:1517.83px;font-size:30.67px;font-weight:400;letter-spacing:0.585px;color:#6e1218;">Not Insertable</div>
<div class="b" style="left:1550.70px;top:1507.12px;width:188.00px;height:50.20px;background:#e3f3fb;border-radius:25px"></div>
<div class="t" style="left:1570.30px;top:1516.53px;font-size:30.67px;font-weight:400;letter-spacing:0.467px;color:#1b3142;">Salesforce</div>
<div class="b" style="left:2203.00px;top:1495.53px;width:164.20px;height:70.90px;background:#fff;border:2px solid #c8ccd2;border-radius:36px;box-shadow:0 1px 2px rgba(0,0,0,0.05)"></div>
<svg style="position:absolute;left:2236px;top:1514.33px" width="34" height="34" viewBox="0 0 34 34"><path d="M20.4 9.3 L25.1 14 L10 29.1 Q8 30.9 5.5 30.3 Q3.6 29.8 3.8 28 Q4 26 5.2 24.5 Z" fill="#18243c"/><path d="M27 3.9 L30.6 7.1 L27.5 10.6 L24 7 Z" fill="#18243c" stroke="#18243c" stroke-width="1.2" stroke-linejoin="round"/></svg>
<div class="t" style="left:2281.90px;top:1516.33px;font-size:30.38px;font-weight:400;letter-spacing:0.333px;color:#3c4655;">Edit</div>
<div class="b" style="left:2393.00px;top:1527.42px;width:8.00px;height:8.00px;background:#727985;border-radius:50%"></div>
<div class="b" style="left:2407.30px;top:1527.42px;width:8.00px;height:8.00px;background:#727985;border-radius:50%"></div>
<div class="b" style="left:2421.70px;top:1527.42px;width:8.00px;height:8.00px;background:#727985;border-radius:50%"></div>
<div class="b" style="left:47.00px;top:1588.40px;width:7.00px;height:116.15px;background:#e8eaed"></div>
<div class="b" style="left:54.00px;top:1590.40px;width:2420.00px;height:112.15px;background:#f8f9f9"></div>
<div class="b" style="left:54.00px;top:1702.55px;width:2420.00px;height:2.00px;background:#dfe1e5"></div>
<div class="b" style="left:92.30px;top:1638.78px;width:19.00px;height:19.00px;background:#cdd1da;border-radius:50%"></div>
<div class="t" style="left:168.70px;top:1628.47px;font-size:35.61px;font-weight:400;letter-spacing:0.757px;color:#111418;-webkit-text-stroke:0.5px #111418;">Birthday</div>
<div class="b" style="left:921.00px;top:1621.98px;width:96.20px;height:49.50px;background:#eff1f4;border-radius:11px"></div>
<div class="t" style="left:939.20px;top:1631.47px;font-size:30.96px;font-weight:400;letter-spacing:0.867px;color:#5a6473;">Text</div>
<div class="b" style="left:1211.70px;top:1628.48px;width:177.10px;height:39.00px;background:#e8f8ee;border-radius:20px"></div>
<div class="t" style="left:1230.30px;top:1632.78px;font-size:30.96px;font-weight:400;letter-spacing:0.311px;color:#285545;">Insertable</div>
<div class="b" style="left:1550.70px;top:1621.28px;width:188.00px;height:50.20px;background:#e3f3fb;border-radius:25px"></div>
<div class="t" style="left:1570.30px;top:1630.67px;font-size:30.67px;font-weight:400;letter-spacing:0.467px;color:#1b3142;">Salesforce</div>
<div class="b" style="left:2203.00px;top:1609.68px;width:164.20px;height:70.90px;background:#fff;border:2px solid #c8ccd2;border-radius:36px;box-shadow:0 1px 2px rgba(0,0,0,0.05)"></div>
<svg style="position:absolute;left:2236px;top:1628.48px" width="34" height="34" viewBox="0 0 34 34"><path d="M20.4 9.3 L25.1 14 L10 29.1 Q8 30.9 5.5 30.3 Q3.6 29.8 3.8 28 Q4 26 5.2 24.5 Z" fill="#18243c"/><path d="M27 3.9 L30.6 7.1 L27.5 10.6 L24 7 Z" fill="#18243c" stroke="#18243c" stroke-width="1.2" stroke-linejoin="round"/></svg>
<div class="t" style="left:2281.90px;top:1630.47px;font-size:30.38px;font-weight:400;letter-spacing:0.333px;color:#3c4655;">Edit</div>
<div class="b" style="left:2393.00px;top:1641.58px;width:8.00px;height:8.00px;background:#727985;border-radius:50%"></div>
<div class="b" style="left:2407.30px;top:1641.58px;width:8.00px;height:8.00px;background:#727985;border-radius:50%"></div>
<div class="b" style="left:2421.70px;top:1641.58px;width:8.00px;height:8.00px;background:#727985;border-radius:50%"></div>
</body></html>
